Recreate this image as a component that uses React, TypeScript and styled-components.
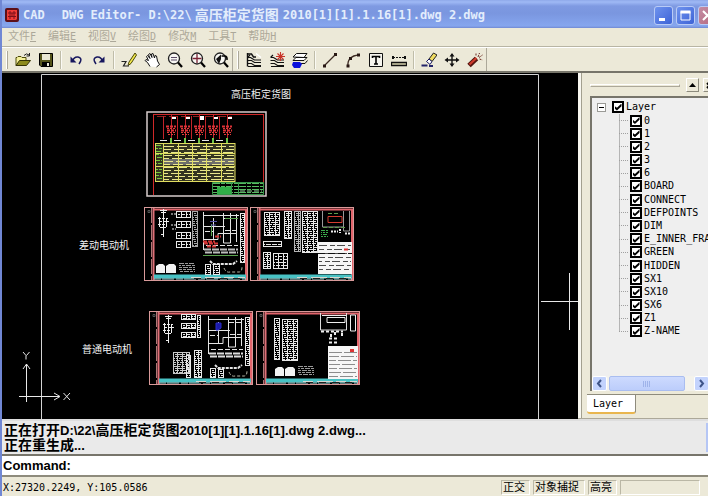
import React from "react";
import styled, { createGlobalStyle } from "styled-components";

const CJK = `"Noto Sans CJK SC"`;
const MONO = `"DejaVu Sans Mono", ${CJK}, monospace`;
const SANS = `"Liberation Sans", ${CJK}, sans-serif`;
const FACE = "#ece9d8";

const GlobalStyle = createGlobalStyle`
  * { box-sizing: border-box; }
  body { margin: 0; overflow: hidden; background: ${FACE}; }
  button, input { font: inherit; color: inherit; margin: 0; padding: 0; border: 0; background: none; }
`;

const Window = styled.div`
  display: flex;
  flex-direction: column;
  height: 100vh;
  border-left: 2px solid #7087d4;
  background: ${FACE};
  color: #000;
  font: 10px/13px ${MONO};
`;

/* ---------- title bar ---------- */

const TitleBar = styled.header`
  display: flex;
  align-items: center;
  flex: none;
  height: 28px;
  padding: 2px 0 0 3px;
  gap: 4px;
  overflow: hidden;
  background: linear-gradient(#8fa9ea, #9fb9f5 2px, #7f9ae2 6px, #7a96df 13px, #82a1ea 22px, #86a6ee 26px, #7089d2);
  color: #e3edfc;
`;

const Title = styled.h1`
  display: flex;
  align-items: center;
  margin: 0;
  flex: 1;
  white-space: pre;
  font: bold 12px/18px ${MONO};
`;

const TitleLead = styled.span`
  margin-right: 17px;
`;

const TitleName = styled.span`
  margin: 0 4px 0 3px;
  font-size: 14px;
`;

const Caption = styled.div`
  display: flex;
  gap: 3px;
  margin-right: -9px;
`;

const CaptionButton = styled.button<{ $close?: boolean }>`
  display: grid;
  place-items: center;
  width: 19px;
  height: 19px;
  border: 1px solid #b9cbf6;
  border-radius: 3px;
  background: ${(p) =>
    p.$close
      ? "linear-gradient(135deg, #c48da4, #b5687f)"
      : "linear-gradient(135deg, #6f93ee, #3d63d6)"};
`;

/* ---------- menu and toolbar ---------- */

const MenuBar = styled.nav`
  display: flex;
  align-items: center;
  flex: none;
  gap: 12px;
  height: 19px;
  padding-left: 6px;
  border-bottom: 1px solid #b8b5a4;
  color: #aca899;
  font-size: 11px;
`;

const MenuButton = styled.button`
  white-space: nowrap;
  font-size: 11px;
  line-height: 16px;
`;

const Accel = styled.u`
  font-size: 10px;
`;

const ToolRow = styled.div`
  display: flex;
  align-items: stretch;
  flex: none;
  height: 26px;
  border-top: 1px solid #fff;
  border-bottom: 2px solid #77756a;
`;

const ToolBand = styled.div`
  display: flex;
  align-items: center;
  padding-left: 4px;
  border-right: 1px solid #aca899;
`;

const Grip = styled.span`
  width: 2px;
  height: 18px;
  margin-right: 3px;
  border-left: 1px solid #fff;
  border-right: 1px solid #aca899;
`;

const Divider = styled.span`
  width: 2px;
  height: 18px;
  margin: 0 2px 0 3px;
  border-left: 1px solid #c0bda9;
  border-right: 1px solid #fbfaf4;
`;

const ToolButton = styled.button`
  display: grid;
  place-items: center;
  width: 23px;
  height: 22px;
`;

/* ---------- work area ---------- */

const Work = styled.main`
  display: flex;
  flex: 1;
  min-height: 0;
`;

const Canvas = styled.section`
  flex: 1;
  min-width: 0;
  background: #000;
`;

const Drawing = styled.svg`
  display: block;
  width: 100%;
  height: 100%;
`;

const Panel = styled.aside`
  display: flex;
  flex-direction: column;
  width: 130px;
  padding: 3px 0 4px 9px;
  overflow: hidden;
  border-bottom: 1px solid #aca899;
  background: linear-gradient(90deg, #f8f7f0 3px, #a3a08f 3px, #a3a08f 4px, ${FACE} 4px);
`;

const PanelHead = styled.div`
  display: flex;
  align-items: center;
  flex: none;
  gap: 4px;
  height: 18px;
  margin: 0 -8px 2px 3px;
`;

const HeadLine = styled.span`
  flex: 1;
  height: 3px;
  margin-right: 2px;
  border: 1px solid #aca899;
  border-top-color: #fff;
  border-left-color: #fff;
`;

const HeadButton = styled.button`
  display: grid;
  place-items: center;
  width: 13px;
  height: 14px;
  border: 1px solid #fff;
  border-right-color: #8d8b7d;
  border-bottom-color: #8d8b7d;
`;

const TreeBox = styled.div`
  display: flex;
  flex-direction: column;
  flex: 1;
  min-height: 0;
  margin-left: 3px;
  border: solid #77756b;
  border-width: 2px 0 0 2px;
  background: #efefef;
`;

const Tree = styled.ul`
  flex: 1;
  min-height: 0;
  margin: 0;
  padding: 2px 0 0 5px;
  overflow: hidden;
  list-style: none;
`;

const TreeRoot = styled.div`
  display: flex;
  align-items: center;
  height: 14px;
`;

const Toggle = styled.button`
  display: grid;
  place-items: center;
  width: 9px;
  height: 9px;
  margin-right: 6px;
  border: 1px solid #9a9a96;
  background: #fff;
  &::before { content: ""; width: 5px; height: 1px; background: #000; }
`;

const Layers = styled.ul`
  display: grid;
  grid-auto-rows: 1fr;
  min-height: 224px;
  margin: 0 0 0 22px;
  padding: 0;
  list-style: none;
`;

const LayerItem = styled.li`
  display: flex;
  align-items: center;
  background: linear-gradient(#b5b5b5, #b5b5b5) 0 0 / 1px 100% no-repeat;
  &:last-child { background-size: 1px 50%; }
  &::before { content: ""; width: 9px; margin-right: 2px; border-top: 1px dotted #a0a0a0; }
`;

const CheckLabel = styled.label`
  display: flex;
  align-items: center;
  gap: 2px;
  white-space: nowrap;
  line-height: 12px;
`;

const Check = styled.input`
  appearance: none;
  display: grid;
  place-items: center;
  flex: none;
  width: 12px;
  height: 12px;
  border: 2px solid #000;
  background: #fff;
  &:checked::before {
    content: "";
    width: 7px;
    height: 7px;
    background: #000;
    clip-path: polygon(0 35%, 35% 62%, 100% 0, 100% 38%, 35% 100%, 0 72%);
  }
`;

const ScrollBar = styled.div`
  display: flex;
  flex: none;
  gap: 2px;
  height: 15px;
  margin-right: -1px;
  background: #f3f2ec;
`;

const ScrollButton = styled.button`
  display: grid;
  place-items: center;
  width: 15px;
  border: 1px solid #fff;
  border-radius: 2px;
  background: #c3d3fd;
`;

const ScrollThumb = styled.div`
  display: grid;
  place-items: center;
  width: 76px;
  margin-right: auto;
  border: 1px solid #a9bdf0;
  border-radius: 2px;
  background: linear-gradient(#cddafe, #bccdfb);
`;

const TabRow = styled.div`
  display: flex;
  flex: none;
  border-top: 1px solid #8e8b7c;
  margin-top: 3px;
`;

const Tab = styled.button`
  width: 49px;
  height: 19px;
  padding-right: 6px;
  border-right: 1px solid #8e8b7c;
  border-bottom: 2px solid #e9b64e;
  border-radius: 0 0 3px 3px;
  background: #fff;
`;

/* ---------- output, command line, status ---------- */

const Output = styled.section`
  display: flex;
  justify-content: space-between;
  flex: none;
  height: 37px;
  padding: 2px 0 2px 2px;
  border-top: 2px solid #dedede;
  border-bottom: 2px solid #77756b;
  background: #eaeaea;
  font: bold 13px/15px ${SANS};
`;

const OutputLine = styled.p`
  margin: 0;
  white-space: nowrap;
`;

const Han = styled.span`
  font-size: 14px;
`;

const OutputScroll = styled.div`
  width: 2px;
  background: #b5c6f5;
`;

const CommandRow = styled.label`
  display: flex;
  align-items: center;
  flex: none;
  gap: 4px;
  height: 21px;
  padding-left: 1px;
  border-bottom: 2px solid #8e8b7c;
  background: #fff;
  font: bold 13px/18px ${SANS};
`;

const CommandInput = styled.input`
  flex: 1;
  min-width: 0;
  outline: 0;
`;

const StatusBar = styled.footer`
  display: flex;
  align-items: center;
  flex: none;
  gap: 3px;
  height: 19px;
  padding: 2px 8px 0 1px;
`;

const Coordinates = styled.span`
  flex: 1;
  white-space: nowrap;
`;

const StatusCell = styled.button<{ $w: number }>`
  width: ${(p) => p.$w}px;
  height: 15px;
  border: 1px solid #bab7a5;
  border-right-color: #fff;
  border-bottom-color: #fff;
  text-align: left;
  white-space: nowrap;
  font-size: 11px;
  line-height: 12px;
  padding-left: 1px;
`;

/* ---------- icons ---------- */

const lens = (
  <>
    <circle cx="7" cy="6.5" r="5.5" fill="#f8f8f4" stroke="#222" strokeWidth="1.3" />
    <path d="M11 10.5 15 15" stroke="#000" strokeWidth="2.2" />
  </>
);

const sheets = (
  <path
    d="M1.5 5.5 4 3M1.5 8.5h4l3 2H15M1.5 11.5h4l3 2H15M1.5 5.5h3l4 2.5H15M2 14.500h13"
    stroke="#111"
    strokeWidth="1.2"
  />
);

const icons: Record<string, React.ReactNode> = {
  open: (
    <>
      <path d="M1 13.500V5.500h1l1-1h3l1 1h4v3" fill="#f4f09a" stroke="#4c4a08" />
      <path d="M1 13.500 4.500 8.500H15.500L11.500 13.500Z" fill="#8c8a1c" stroke="#333204" />
      <path d="M9 3.500Q11.500 0.500 14 3M14.500 1v3h-3" stroke="#222" />
    </>
  ),
  save: (
    <>
      <path d="M1.500 1.500h13v13H3L1.500 13Z" fill="#55551c" stroke="#000" />
      <path d="M4 2h8v6H4Z" fill="#e9e7d5" />
      <path d="M4 10h8v4.500H4Z" fill="#000" />
      <path d="M9 11h2v3H9Z" fill="#e9e7d5" />
    </>
  ),
  undo: (
    <>
      <path d="M4.500 9Q6 4.500 10 5Q14 6 12.500 9.500L11 12" stroke="#17175e" strokeWidth="1.5" />
      <path d="M2.500 4.500v6H8.500Z" fill="#17175e" />
    </>
  ),
  redo: (
    <>
      <path d="M11.500 9Q10 4.500 6 5Q2 6 3.500 9.500L5 12" stroke="#17175e" strokeWidth="1.5" />
      <path d="M13.500 4.500v6H7.500Z" fill="#17175e" />
    </>
  ),
  pencil: (
    <>
      <path d="M14 1 8 10 7 13.500 10 11.500 15.500 3Z" fill="#f2e84c" stroke="#4a4708" />
      <path d="M0.500 9.500H5L2.500 14H8" stroke="#222" strokeWidth="1.2" />
    </>
  ),
  hand: (
    <path
      d="M6 14.500 3.500 10.500 1 8.500 2 7.500 4.500 8.500 2.500 4.500 3.500 3.500 6 6.500 4.500 2.500 6 1.500 8 5.500 7.500 2 9 1.500 10.500 6 11 3.500 12.500 4 13.500 9 15.500 12.500 12.500 15"
      fill="#fff"
      stroke="#111"
    />
  ),
  zoomWindow: (
    <>
      {lens}
      <path d="M4 5.500h6M4 8h6" stroke="#5a4a66" />
    </>
  ),
  zoomIn: (
    <>
      {lens}
      <path d="M7 2v9M2.500 6.500h9" stroke="#7c2436" strokeWidth="1.3" />
    </>
  ),
  zoomPrevious: (
    <>
      {lens}
      <path d="M8.500 4H12q2.500 0.500 2 4" stroke="#000" strokeWidth="1.5" />
      <path d="M3 7 8 2.500V7L6 12Z" fill="#111" />
    </>
  ),
  layers: (
    <>
      <path d="M1.500 1v13.500M1.500 2h4l2 3H10" stroke="#111" strokeWidth="1.4" />
      {sheets}
      <path d="M10 1.500 15 5.500" stroke="#fff" strokeWidth="1.4" />
    </>
  ),
  newLayer: (
    <>
      {sheets}
      <path d="M11.500 0v9M7 4.500h9M8.500 1.500l6 6M14.500 1.500l-6 6" stroke="#c83228" strokeWidth="1.1" />
    </>
  ),
  layerState: (
    <>
      <path d="M1 5 4.500 1.500H15L12 5.500ZM1 8.500 4 5.500H15L12 8.500Z" fill="#fff" stroke="#111" />
      <path d="M5 11.500h8L15.500 8.500" stroke="#111" />
      <path d="M1 10h7l2 2-2 4H2L0 13Z" fill="#0a10dc" />
    </>
  ),
  line: (
    <>
      <path d="M2.500 13.500 13.500 2.500" stroke="#3c2a22" strokeWidth="1.3" />
      <path d="M1 12.500h3v3H1ZM12 1h3v3h-3Z" fill="#281814" />
    </>
  ),
  arc: (
    <>
      <path d="M3 14Q2 4 14 3" stroke="#3c2a22" strokeWidth="1.3" />
      <path d="M1.500 12.500h3v3h-3ZM4 5h3v3H4ZM12 1.500h3v3h-3Z" fill="#281814" />
    </>
  ),
  text: (
    <>
      <path d="M1.500 1.500h13v13h-13Z" fill="#f6f5ee" stroke="#111" />
      <path d="M4.500 6V4.500h7V6M8 4.500v8M6 12h4" stroke="#000" strokeWidth="1.6" />
    </>
  ),
  dimension: (
    <>
      <path d="M2 5.500h12" stroke="#111" strokeDasharray="2 1" />
      <path d="M1 4h2v3H1ZM13 4h2v3h-2Z" fill="#111" />
      <path d="M0.500 10.500h15v3H0.500Z" fill="#d8d5b0" stroke="#111" strokeWidth="1.3" />
    </>
  ),
  erase: (
    <>
      <path d="M8 7 12.500 1 16 3 11 9.500Z" fill="#f0dc60" stroke="#222" />
      <path d="M5.500 9.500 8 7l3 2.500-2 3Z" fill="#fff" stroke="#17175e" />
      <path d="M0.500 13.500h6M8 14h4" stroke="#25256a" strokeWidth="1.8" />
    </>
  ),
  move: (
    <>
      <path d="M8 2v12M2 8h12" stroke="#111" strokeWidth="1.4" />
      <path d="M8 1 10.500 4.500H5.500ZM8 15l2.500-3.500H5.500ZM0.500 8l3.500-2.500v5ZM15.500 8l-3.500-2.500v5Z" fill="#111" />
    </>
  ),
  explode: (
    <>
      <path d="M2 13.500 9.500 6.500" stroke="#54160f" strokeWidth="5" />
      <path d="M2.500 12.500 9.500 6" stroke="#cf3b2c" strokeWidth="2.2" />
      <path d="M11 5 12.500 1M12 5.500 15.500 3M12.500 7 15.500 8M9 3.500V1" stroke="#6b2a20" strokeDasharray="2 1" />
    </>
  ),
};

const Icon = ({ name }: { name: string }) => (
  <svg width="16" height="16" viewBox="0 0 16 16" fill="none" aria-hidden="true">
    {icons[name]}
  </svg>
);

const Chevron = ({ d }: { d: string }) => (
  <svg width="9" height="9" viewBox="0 0 9 9" fill="none" aria-hidden="true">
    <path d={d} stroke="#3e5488" strokeWidth="2" />
  </svg>
);

const Tools = ({ groups }: { groups: string[][] }) => (
  <ToolBand>
    <Grip />
    {groups.map((group, i) => (
      <React.Fragment key={i}>
        {i > 0 && <Divider />}
        {group.map((name) => (
          <ToolButton key={name} aria-label={name}>
            <Icon name={name} />
          </ToolButton>
        ))}
      </React.Fragment>
    ))}
  </ToolBand>
);

/* ---------- CAD sheets ---------- */

type Box = { x: number; y: number; w: number; h: number; c?: string };

/* A block of short horizontal strokes: rows of small annotation. */
const Rows = ({ x, y, w, h, c = "#e8e8e8", step = 3, dash = "4 1 2 1", t = 1 }: Box & { step?: number; dash?: string; t?: number }) => (
  <g stroke={c} strokeWidth={t}>
    {Array.from({ length: Math.ceil(h / step) }, (_, i) => (
      <path key={i} d={`M${x} ${y + i * step + 0.5}h${w}`} strokeDasharray={dash} strokeDashoffset={(i * 3) % 7} />
    ))}
  </g>
);

/* A ruled block with a frame and evenly spaced columns. */
const Ruled = ({ x, y, w, h, c = "#e8e8e8", cols = 1, step = 2, dash }: Box & { cols?: number; step?: number; dash?: string }) => (
  <g>
    <Rows x={x} y={y} w={w} h={h} c={c} step={step} dash={dash} />
    <g stroke={c} fill="none">
      <rect x={x + 0.5} y={y + 0.5} width={w - 1} height={h - 1} />
      {Array.from({ length: cols - 1 }, (_, i) => (
        <path key={i} d={`M${x + Math.round((w * (i + 1)) / cols) + 0.5} ${y}v${h}`} />
      ))}
    </g>
  </g>
);

const Sheet = ({ x, y }: { x: number; y: number }) => (
  <g fill="none">
    <rect x={x + 0.5} y={y + 0.5} width="103" height="73" stroke="#d99a9a" />
    <path d={`M${x + 9.5} ${y + 1}v72`} stroke="#df7078" strokeWidth="2" />
    <path d={`M${x + 10} ${y + 2.5}h93M${x + 102} ${y + 2}v71`} stroke="#e2656c" strokeWidth="2" />
    <path d={`M${x + 7.5} ${y + 1}v72`} stroke="#b07878" strokeDasharray="15 2" />
    <path d={`M${x + 4} ${y + 3.500}h2v2h-2z`} stroke="#555" />
    <path d={`M${x + 10} ${y + 69.500}h92`} stroke="#48c2c4" strokeWidth="4" />
    <path d={`M${x + 10} ${y + 72}h92`} stroke="#a9dcdc" strokeDasharray="7 1 12 2" />
    <path d={`M${x + 47} ${y + 70.500}h54`} stroke="#d8d8d0" strokeDasharray="10 4 16 3" />
    <path d={`M${x + 50} ${y + 71.500}h50`} stroke="#202020" strokeDasharray="7 6" />
  </g>
);

const Symbol = ({ x, y }: { x: number; y: number }) => (
  <g stroke="#f0f0f0" fill="none">
    <path d={`M${x + 0.500} ${y}v28M${x - 3} ${y + 1.500}h7M${x - 2} ${y + 3.500}h5`} />
    <path d={`M${x - 5} ${y + 9.500}h10M${x - 4} ${y + 12.500}h10M${x - 5} ${y + 15.500}h9M${x - 3} ${y + 18.500}h6M${x - 2} ${y + 25.500}h4`} strokeDasharray="3 1" />
    <path d={`M${x - 3.500} ${y + 8}v10M${x + 3.500} ${y + 10}v8`} />
  </g>
);

const Schematic = ({ x, y, tint }: { x: number; y: number; tint?: boolean }) => (
  <g fill="none" stroke="#e4e4e4">
    <path d={`M${x + 0.500} ${y}v38M${x} ${y + 3.500}h36M${x + 20.500} ${y + 1}v30h7v-30M${x} ${y + 14.500}h22M${x + 33.500} ${y + 2}v28M${x} ${y + 27.500}h15v-6h18M${x + 10.500} ${y + 6}v22`} />
    <path d={`M${x + 21} ${y + 6.500}h14M${x + 2} ${y + 19.500}h9M${x + 3} ${y + 33.500}h32M${x + 22} ${y + 18.500}h12`} strokeDasharray="5 2" />
    <path d={`M${x + 7} ${y + 49}l3 3h20l4-3`} strokeWidth="2" strokeDasharray="3 1" />
    <path d={`M${x + 1} ${y + 37.500}h34M${x + 2} ${y + 40.500}h33`} stroke={tint ? "#bdbdbd" : "#dcdcdc"} strokeWidth="2" strokeDasharray="7 1" />
    {tint ? (
      <>
        <path d={`M${x} ${y + 43.500}h35M${x + 22} ${y + 6.500}h13M${x + 8.500} ${y + 12}v12`} stroke="#5aa34e" />
        <path d={`M${x + 12} ${y + 24.500}h6M${x + 1} ${y + 31.500}h14M${x + 4} ${y + 34.500}h10M${x} ${y + 29.500}h12`} stroke="#d23434" strokeWidth="2" strokeDasharray="4 1" />
        <path d={`M${x + 7} ${y + 9.500}h7M${x + 8} ${y + 13}h5`} stroke="#5552a8" />
      </>
    ) : (
      <path d={`M${x + 8} ${y + 7}h5v5l-3 2h-2z`} fill="#1b1ba8" stroke="#2b2bc8" />
    )}
    <path d={`M${x + 21} ${y + 56}q2 5 6 4h9q3 0 3-5`} stroke="#b7b7a7" strokeDasharray="3 2" />
  </g>
);

const Motors = ({ x, y }: { x: number; y: number }) => (
  <g fill="#f2f2f2">
    <path d={`M${x} ${y + 1}l3-2h4l2 2v7h-9zM${x + 10} ${y + 1}l3-2h5l2 2v7h-10z`} />
    <Rows x={x + 23} y={y - 2} w={16} h={9} step={2} dash="5 1 3 1" c="#999" />
  </g>
);

const LayoutSheet = () => (
  <g fill="none">
    <rect x="147" y="112" width="119" height="84" stroke="#d6cccc" strokeWidth="1.5" />
    <path d="M153.500 114V195M153 114.500H263M263.500 114V183" stroke="#d02828" />
    <path d="M157 116.500H232" stroke="#8e2222" strokeDasharray="9 3" />
    {[171, 185, 199, 213, 227].map((x, i) => (
      <g key={x}>
        <path d={`M${x - 7.500} 116V139M${x + 0.500} 115V138`} stroke="#c2242a" />
        <path d={`M${x - 5} 126.500h10M${x - 4} 130.500h9`} stroke="#de3338" strokeWidth="2" strokeDasharray="3 1" />
        <path d={`M${x - 3} 134.500h7M${x - 4} 128.500h9M${x - 4} 132.500h8`} stroke="#e03a3a" strokeDasharray="2 1" />
        <path d={`M${x + 1} 118h4`} stroke="#fff" strokeWidth={i === 2 ? 4 : 2} />
        <path d={`M${x} 138v5`} stroke="#6ec44a" strokeWidth="2" />
        <path d={`M${x - 11} 140.500h7`} stroke="#e9e9e9" />
      </g>
    ))}
    <rect x="155" y="143" width="80" height="39" fill="#343420" />
    <path d="M164 163.500H234M164 160.500H234" stroke="#6e6e6a" strokeWidth="3" />
    <Rows x={164} y={146} w={70} h={34} step={3} dash="10 3" c="#e9e68c" />
    <Rows x={156} y={145} w={6} h={35} step={3} dash="5 1" c="#76c83a" />
    <path d="M155.500 143V182M163.500 143V182M178.500 143V182M192.500 143V182M206.500 143V182M221.500 143V182M235 143V182M155 143.500H235M155 181.500H235M155 153.500H235M155 166.500H235" stroke="#dfdc60" />
    <path d="M213 183.500H263M213 186.500H263M213 189.500H263M213 192.500H263" stroke="#58ba62" strokeDasharray="7 1 4 1" />
    <path d="M217 187h14v7h-14z" fill="#30ae48" />
    <path d="M212.500 182.500h51v12h-51zM231.500 183v11M238.500 183v11" stroke="#37964a" />
    <path d="M240 191h22" stroke="#8fd59b" strokeDasharray="5 2" />
  </g>
);

const CadDrawing = () => (
  <Drawing aria-label="drawing">
    <g transform="translate(-2 -73)">
      <path d="M41.500 2000V74.500H538.500V2000" stroke="#d4d4d4" fill="none" />
      <g fill="#f2f2f2" fontFamily={`${CJK}, sans-serif`} fontSize="10" textAnchor="middle">
        <text x="261" y="98">高压柜定货图</text>
        <text x="104" y="249">差动电动机</text>
        <text x="107" y="353">普通电动机</text>
      </g>

      <LayoutSheet />

      <Sheet x={144} y={207} />
      <Symbol x={163} y={209} />
      {[211, 221, 232, 241].map((y) => (
        <Ruled key={y} x={176} y={y} w={15} h={7} cols={3} step={3} />
      ))}
      <path d="M171 214h5M171 225h5M172 229h4" stroke="#eee" strokeDasharray="2 1" />
      <Ruled x={192} y={211} w={6} h={36} c="#a8a8a8" />
      <Schematic x={203} y={212} tint />
      <Ruled x={240} y={213} w={5} h={50} />
      <Motors x={156} y={265} />
      <Ruled x={205} y={264} w={6} h={11} />
      <Ruled x={213} y={264} w={7} h={11} />

      <Sheet x={250} y={207} />
      <Ruled x={264} y={212} w={16} h={24} cols={3} />
      <Ruled x={284} y={211} w={8} h={28} cols={2} />
      <Ruled x={294} y={211} w={7} h={41} cols={2} c="#b4b4b4" />
      <Ruled x={302} y={211} w={16} h={42} cols={3} />
      <Ruled x={263} y={241} w={19} h={6} dash="5 1" step={3} />
      <Ruled x={263} y={252} w={8} h={17} cols={2} />
      <Ruled x={273} y={253} w={15} h={16} cols={3} step={3} />
      <path d="M322.500 211v16h21v-16M343.500 211v20h6v-20" stroke="#999" fill="none" />
      <path d="M328 216.500h14v6h-14z" stroke="#d43c30" fill="none" />
      <path d="M323 227.500h22M328 213.500h12" stroke="#5e9a4c" strokeDasharray="4 2" />
      <Rows x={321} y={230} w={7} h={7} step={2} c="#3aa94a" />
      <path d="M331 231.500h7M345 233.500h5M340 229v4" stroke="#eee" strokeWidth="2" strokeDasharray="2 1" />
      <path d="M318 242h34v32h-34z" fill="#f6f6f6" />
      <Rows x={319} y={245} w={32} h={28} step={4} dash="8 3 5 2" c="#4c4c4c" />
      <path d="M318 253.500h34" stroke="#111" strokeDasharray="7 3" />
      <path d="M344 249.500h4" stroke="#d33" strokeWidth="2" />

      <Sheet x={149} y={311} />
      <Symbol x={168} y={315} />
      {[314, 323, 332].map((y) => (
        <Ruled key={y} x={181} y={y} w={15} h={6} cols={3} />
      ))}
      <Ruled x={197} y={315} w={4} h={23} />
      <Schematic x={208} y={316} />
      <Ruled x={245} y={317} w={5} h={49} />
      <Ruled x={173} y={352} w={17} h={22} cols={4} c="#c8c8c8" />
      <Ruled x={186} y={355} w={5} h={23} />
      <Ruled x={194} y={350} w={8} h={28} cols={2} />
      <Ruled x={210} y={368} w={6} h={10} />
      <Ruled x={218} y={369} w={6} h={9} />

      <Sheet x={256} y={311} />
      <Ruled x={274} y={318} w={6} h={42} />
      <Ruled x={282} y={319} w={16} h={42} cols={3} />
      <Motors x={275} y={368} />
      <path d="M320.500 313v17h26v-17" stroke="#ddd" fill="none" />
      <path d="M327 317.500h18v5h-18zM350.500 315h5v16h-5zM322 315.500h24" stroke="#eee" fill="none" />
      <path d="M321 331.500h22M331 334v3M335 332v4M342 333v3M329 338.500h8M329 342.500h8" stroke="#eee" strokeWidth="2" strokeDasharray="3 2" />
      <path d="M328 346h30v33h-30z" fill="#f6f6f6" />
      <Rows x={329} y={352} w={28} h={26} step={4} dash="13 2" c="#8c8c8c" />
      <path d="M350 350.500h4" stroke="#d33" strokeWidth="3" />

      <g stroke="#e8e8e8" fill="none">
        <path d="M569.500 273V330M541 301.500H578" />
        <path d="M26.500 364V402M23 369l3.500-5 3.500 5M19 396.500H59M54 393l6 3.500-6 3.500" />
        <path d="M23 352l3 3.500v4M29.500 352l-3 3.500M63.500 393l6.500 7M70 393l-6.500 7" />
      </g>
    </g>
  </Drawing>
);

/* ---------- data and page ---------- */

const menus = [
  ["文件", "F"],
  ["编辑", "E"],
  ["视图", "V"],
  ["绘图", "D"],
  ["修改", "M"],
  ["工具", "T"],
  ["帮助", "H"],
];

const layers = [
  "0", "1", "2", "3", "6", "BOARD", "CONNECT", "DEFPOINTS", "DIM", "E_INNER_FRAME",
  "GREEN", "HIDDEN", "SX1", "SX10", "SX6", "Z1", "Z-NAME",
];

export default function App() {
  return (
    <>
      <GlobalStyle />
      <Window>
        <TitleBar>
          <svg width="14" height="14" viewBox="0 0 14 14" fill="none" aria-hidden="true">
            <rect width="14" height="14" rx="2" fill="#5c0f18" />
            <path d="M2 2h10v9l-1 1H2z" fill="#ee3b36" />
            <path d="M3 5h8M3 8.500h8M5 3v8M9 3v8M7 5v4" stroke="#7d1018" />
          </svg>
          <Title>
            <TitleLead>CAD</TitleLead>
            {"DWG Editor- D:\\22\\"}
            <TitleName>高压柜定货图</TitleName>
            {"2010[1][1].1.16[1].dwg 2.dwg"}
          </Title>
          <Caption>
            <CaptionButton aria-label="Minimize">
              <svg width="11" height="11" viewBox="0 0 11 11"><path d="M1 8h6v3H1z" fill="#fff" /></svg>
            </CaptionButton>
            <CaptionButton aria-label="Maximize">
              <svg width="11" height="11" viewBox="0 0 11 11" fill="none">
                <path d="M1 1.500h9v8.500H1z" stroke="#fff" />
                <path d="M0.500 2h10" stroke="#fff" strokeWidth="3" />
              </svg>
            </CaptionButton>
            <CaptionButton $close aria-label="Close">
              <svg width="11" height="11" viewBox="0 0 11 11"><path d="M1 1l9 9M10 1l-9 9" stroke="#fff" strokeWidth="2" /></svg>
            </CaptionButton>
          </Caption>
        </TitleBar>

        <MenuBar>
          {menus.map(([name, key]) => (
            <MenuButton key={key}>
              {name}
              <Accel>{key}</Accel>
            </MenuButton>
          ))}
        </MenuBar>

        <ToolRow>
          <Tools
            groups={[
              ["open", "save"],
              ["undo", "redo"],
              ["pencil", "hand", "zoomWindow", "zoomIn", "zoomPrevious"],
            ]}
          />
          <Tools
            groups={[
              ["layers", "newLayer", "layerState"],
              ["line", "arc", "text", "dimension"],
              ["erase", "move", "explode"],
            ]}
          />
        </ToolRow>

        <Work>
          <Canvas>
            <CadDrawing />
          </Canvas>
          <Panel>
            <PanelHead>
              <HeadLine />
              <HeadButton aria-label="Collapse">
                <svg width="7" height="4" viewBox="0 0 7 4"><path d="M3.500 0 7 4H0z" fill="#000" /></svg>
              </HeadButton>
              <HeadButton aria-label="Close panel">
                <svg width="7" height="7" viewBox="0 0 7 7"><path d="M1 1l5 5M6 1 1 6" stroke="#000" strokeWidth="2" /></svg>
              </HeadButton>
            </PanelHead>
            <TreeBox>
              <Tree>
                <li>
                  <TreeRoot>
                    <Toggle aria-label="Collapse Layer" />
                    <CheckLabel>
                      <Check type="checkbox" defaultChecked />
                      Layer
                    </CheckLabel>
                  </TreeRoot>
                  <Layers>
                    {layers.map((name) => (
                      <LayerItem key={name}>
                        <CheckLabel>
                          <Check type="checkbox" defaultChecked />
                          {name}
                        </CheckLabel>
                      </LayerItem>
                    ))}
                  </Layers>
                </li>
              </Tree>
              <ScrollBar>
                <ScrollButton aria-label="Scroll left"><Chevron d="M6 1 3 4.500 6 8" /></ScrollButton>
                <ScrollThumb>
                  <svg width="8" height="6" viewBox="0 0 8 6"><path d="M0.500 0v6M2.500 0v6M4.500 0v6M6.500 0v6" stroke="#9fb3ea" /></svg>
                </ScrollThumb>
                <ScrollButton aria-label="Scroll right"><Chevron d="M3 1 6 4.500 3 8" /></ScrollButton>
              </ScrollBar>
            </TreeBox>
            <TabRow>
              <Tab>Layer</Tab>
            </TabRow>
          </Panel>
        </Work>

        <Output>
          <div>
            <OutputLine>
              <Han>正在打开</Han>D:\22\<Han>高压柜定货图</Han>2010[1][1].1.16[1].dwg 2.dwg...
            </OutputLine>
            <OutputLine>
              <Han>正在重生成</Han>...
            </OutputLine>
          </div>
          <OutputScroll />
        </Output>

        <CommandRow>
          Command:
          <CommandInput type="text" />
        </CommandRow>

        <StatusBar>
          <Coordinates>X:27320.2249, Y:105.0586</Coordinates>
          <StatusCell $w={29}>正交</StatusCell>
          <StatusCell $w={52}>对象捕捉</StatusCell>
          <StatusCell $w={29}>高亮</StatusCell>
          <StatusCell $w={80} aria-label="Empty pane" />
        </StatusBar>
      </Window>
    </>
  );
}
